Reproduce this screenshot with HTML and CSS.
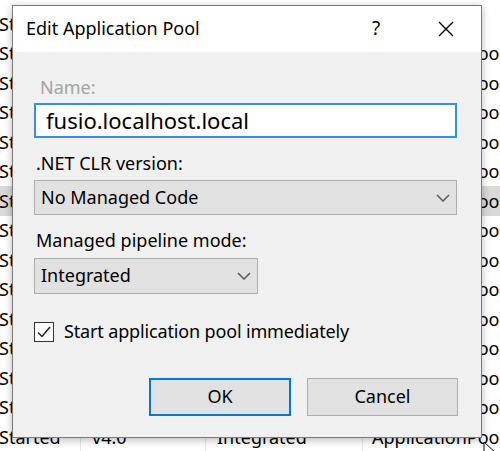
FILE: index.html
```html
<!DOCTYPE html>
<html>
<head>
<meta charset="utf-8">
<link rel="stylesheet" href="styles.css">
</head>
<body>
<div class="screen">
  <div class="list">
    <div class="row"><span class="c c1">Started</span><span class="c c2">v4.0</span><span class="c c3">Integrated</span><span class="c c4"></span></div>
    <div class="row"><span class="c c1">Started</span><span class="c c2">v4.0</span><span class="c c3">Integrated</span><span class="c c4">ApplicationPoolIdentity</span></div>
    <div class="row"><span class="c c1">Started</span><span class="c c2">v4.0</span><span class="c c3">Integrated</span><span class="c c4">ApplicationPoolIdentity</span></div>
    <div class="row"><span class="c c1">Started</span><span class="c c2">v4.0</span><span class="c c3">Integrated</span><span class="c c4">ApplicationPoolIdentity</span></div>
    <div class="row"><span class="c c1">Started</span><span class="c c2">v4.0</span><span class="c c3">Integrated</span><span class="c c4">ApplicationPoolIdentity</span></div>
    <div class="row"><span class="c c1">Started</span><span class="c c2">v4.0</span><span class="c c3">Integrated</span><span class="c c4">ApplicationPoolIdentity</span></div>
    <div class="row selected"><span class="c c1">Started</span><span class="c c2">v4.0</span><span class="c c3">Integrated</span><span class="c c4">ApplicationPoolIdentity</span></div>
    <div class="row"><span class="c c1">Started</span><span class="c c2">v4.0</span><span class="c c3">Integrated</span><span class="c c4">ApplicationPoolIdentity</span></div>
    <div class="row"><span class="c c1">Started</span><span class="c c2">v4.0</span><span class="c c3">Integrated</span><span class="c c4">ApplicationPoolIdentity</span></div>
    <div class="row"><span class="c c1">Started</span><span class="c c2">v4.0</span><span class="c c3">Integrated</span><span class="c c4">ApplicationPoolIdentity</span></div>
    <div class="row"><span class="c c1">Started</span><span class="c c2">v4.0</span><span class="c c3">Integrated</span><span class="c c4">ApplicationPoolIdentity</span></div>
    <div class="row"><span class="c c1">Started</span><span class="c c2">v4.0</span><span class="c c3">Integrated</span><span class="c c4">ApplicationPoolIdentity</span></div>
    <div class="row"><span class="c c1">Started</span><span class="c c2">v4.0</span><span class="c c3">Integrated</span><span class="c c4">ApplicationPoolIdentity</span></div>
    <div class="row"><span class="c c1">Started</span><span class="c c2">v4.0</span><span class="c c3">Integrated</span><span class="c c4">ApplicationPoolIdentity</span></div>
    <div class="row"><span class="c c1">Started</span><span class="c c2">v4.0</span><span class="c c3">Integrated</span><span class="c c4">ApplicationPoolIdentity</span></div>
  </div>

  <div class="dialog">
    <div class="titlebar">
      <span class="title">Edit Application Pool</span>
      <span class="tbtn help">?</span>
      <span class="tbtn close">
        <svg width="16" height="16" viewBox="0 0 16 16"><path d="M1 1 L15 15 M15 1 L1 15" stroke="#000" stroke-width="1.4" fill="none"/></svg>
      </span>
    </div>
    <div class="body">
      <div class="label disabled">Name:</div>
      <div class="textbox">fusio.localhost.local</div>
      <div class="label gap">.NET CLR version:</div>
      <div class="select wide"><span>No Managed Code</span>
        <svg width="14" height="8" viewBox="0 0 14 8"><path d="M1 1 L7 7 L13 1" stroke="#5a5a5a" stroke-width="1.5" fill="none"/></svg>
      </div>
      <div class="label gap">Managed pipeline mode:</div>
      <div class="select narrow"><span>Integrated</span>
        <svg width="14" height="8" viewBox="0 0 14 8"><path d="M1 1 L7 7 L13 1" stroke="#5a5a5a" stroke-width="1.5" fill="none"/></svg>
      </div>
      <div class="check">
        <span class="box"><svg width="18" height="18" viewBox="0 0 18 18"><path d="M3 9.5 L7 13.5 L15 4" stroke="#222" stroke-width="1.5" fill="none"/></svg></span>
        <span class="checklabel">Start application pool immediately</span>
      </div>
      <div class="buttons">
        <div class="btn ok">OK</div>
        <div class="btn cancel">Cancel</div>
      </div>
    </div>
  </div>

  <svg class="cursor" width="20" height="24" viewBox="0 0 20 24"><path d="M1 1 L1 18 L5 14 L8 21 L11 20 L8 13 L14 13 Z" fill="#fff" stroke="#000" stroke-width="1"/></svg>
</div>
</body>
</html>
```

FILE: styles.css
```css
html, body {
  margin: 0;
  padding: 0;
}
body {
  width: 500px;
  height: 451px;
  overflow: hidden;
  background: #ffffff;
  font-family: "Noto Sans", "Open Sans", sans-serif;
  color: #000;
}
.screen {
  position: relative;
  width: 500px;
  height: 451px;
  overflow: hidden;
  background: #fff;
}
.list {
  display: flex;
  flex-direction: column;
  padding-top: 9px;
}
.row {
  height: 29.5px;
  display: grid;
  grid-template-columns: 81px 125px 157px 1fr;
  align-items: stretch;
  font-size: 18px;
  white-space: nowrap;
}
.row.selected {
  background: #d9d9d9;
}
.c {
  display: flex;
  align-items: center;
  overflow: hidden;
  box-sizing: border-box;
}
.c1 { border-right: 1px solid #e5e5e5; padding-left: 0; margin-left: -1px; }
.c2 { border-right: 1px solid #e5e5e5; padding-left: 11px; }
.c3 { border-right: 1px solid #e5e5e5; padding-left: 11px; }
.c4 { padding-left: 9px; }

.dialog {
  position: absolute;
  left: 12px;
  top: 5px;
  width: 470px;
  height: 433px;
  box-sizing: border-box;
  border: 1px solid #7a7a7a;
  background: #f0f0f0;
  box-shadow: 0 2px 8px rgba(0,0,0,0.28);
  display: flex;
  flex-direction: column;
}
.titlebar {
  height: 46px;
  background: #fff;
  display: flex;
  align-items: center;
  flex-shrink: 0;
}
.title {
  font-size: 18px;
  margin-left: 13px;
  flex: 1;
  padding-bottom: 2px;
}
.tbtn {
  width: 70px;
  height: 46px;
  display: flex;
  align-items: center;
  justify-content: center;
}
.help {
  font-size: 19px;
  padding-bottom: 2px;
  box-sizing: border-box;
}
.body {
  padding: 23px 24px 0 21px;
  display: flex;
  flex-direction: column;
  font-size: 18px;
}
.label {
  height: 24px;
  line-height: 24px;
  padding-left: 2px;
}
.label.disabled {
  color: #a2a2a2;
  padding-left: 6px;
}
.label.gap {
  margin-top: 13px;
}
.textbox {
  margin-top: 4px;
  height: 35px;
  box-sizing: border-box;
  border: 2px solid #3a8ee2;
  background: #fff;
  font-size: 22px;
  display: flex;
  align-items: center;
  padding-left: 10px;
  padding-bottom: 2px;
}
.select {
  margin-top: 5px;
  height: 35px;
  box-sizing: border-box;
  border: 1px solid #adadad;
  background: #e1e1e1;
  display: flex;
  align-items: center;
  justify-content: space-between;
  padding: 0 6px 0 6px;
}
.select span {
  padding-bottom: 2px;
}
.select.narrow {
  width: 224px;
  height: 36px;
  margin-top: 6px;
}
.check {
  margin-top: 28px;
  height: 20px;
  display: flex;
  align-items: center;
}
.box {
  width: 20px;
  height: 20px;
  box-sizing: border-box;
  border: 1.5px solid #333;
  background: #fff;
  display: flex;
  align-items: center;
  justify-content: center;
  flex-shrink: 0;
}
.checklabel {
  margin-left: 10px;
  padding-bottom: 2px;
  letter-spacing: -0.15px;
}
.buttons {
  margin-top: 36px;
  margin-right: -1px;
  display: flex;
  justify-content: flex-end;
  gap: 16px;
}
.btn {
  height: 38px;
  box-sizing: border-box;
  background: #e1e1e1;
  display: flex;
  align-items: center;
  justify-content: center;
  padding-bottom: 2px;
}
.btn.ok {
  width: 142px;
  border: 2px solid #0078d7;
}
.btn.cancel {
  width: 151px;
  border: 1.5px solid #adadad;
}
.cursor {
  position: absolute;
  left: 483px;
  top: 441px;
}
```
